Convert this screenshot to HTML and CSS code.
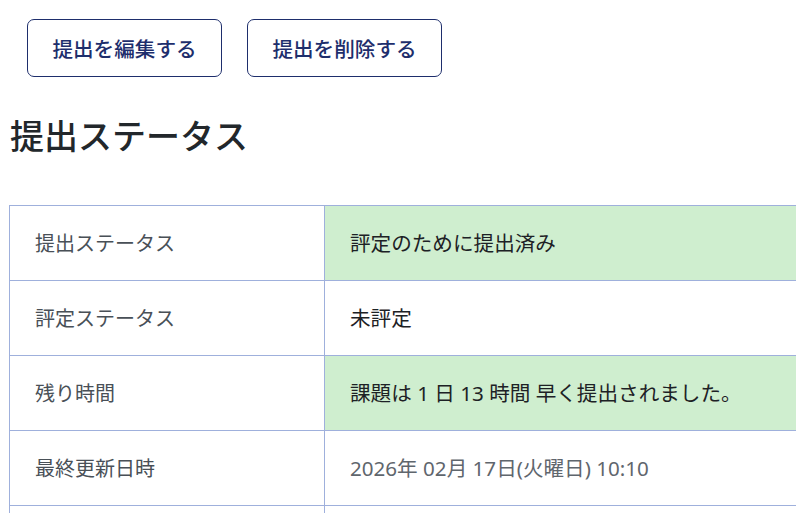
FILE: index.html
```html
<!DOCTYPE html>
<html lang="ja">
<head>
<meta charset="utf-8">
<link rel="stylesheet" href="styles.css">
</head>
<body>
<div class="page">
  <div class="actions">
    <button class="btn">提出を編集する</button>
    <button class="btn">提出を削除する</button>
  </div>
  <h2 class="title">提出ステータス</h2>
  <table class="status">
    <tr>
      <th>提出ステータス</th>
      <td class="ok">評定のために提出済み</td>
    </tr>
    <tr>
      <th>評定ステータス</th>
      <td>未評定</td>
    </tr>
    <tr>
      <th>残り時間</th>
      <td class="ok">課題は 1 日 13 時間 早く提出されました。</td>
    </tr>
    <tr>
      <th>最終更新日時</th>
      <td class="muted">2026年 02月 17日(火曜日) 10:10</td>
    </tr>
    <tr>
      <th>&nbsp;</th>
      <td>&nbsp;</td>
    </tr>
  </table>
</div>
</body>
</html>
```

FILE: styles.css
```css
html, body {
  margin: 0;
  padding: 0;
  background: #fff;
  overflow: hidden;
}
body {
  font-family: "Noto Sans", "Noto Sans CJK JP", sans-serif;
  color: #1d2125;
}
.page {
  padding: 19px 0 0 9px;
  width: 1200px;
}
.actions {
  display: flex;
  gap: 25px;
  padding-left: 18px;
}
.btn {
  width: 195px;
  height: 58px;
  border: 1px solid #1e2e6c;
  border-radius: 7px;
  background: #fff;
  color: #1e2e6c;
  font-family: "Noto Sans", "Noto Sans CJK JP", sans-serif;
  font-size: 20.6px;
  font-weight: 500;
  padding: 0;
}
.title {
  margin: 37px 0 0 1px;
  font-size: 34px;
  font-weight: 500;
  line-height: 44px;
  color: #22272b;
}
.status {
  margin-top: 47px;
  border-collapse: collapse;
  width: 1000px;
}
.status th, .status td {
  border: 1px solid #9fb0dc;
  height: 75px;
  padding: 0 25px 2px;
  font-size: 20px;
  text-align: left;
  vertical-align: middle;
  box-sizing: border-box;
}
.status th {
  width: 315px;
  font-weight: 400;
  color: #495057;
}
.status td {
  color: #1d2125;
  font-size: 20.6px;
}
.status td.ok {
  background: #cfeecf;
}
.status td.muted {
  color: #5f666d;
}
```
